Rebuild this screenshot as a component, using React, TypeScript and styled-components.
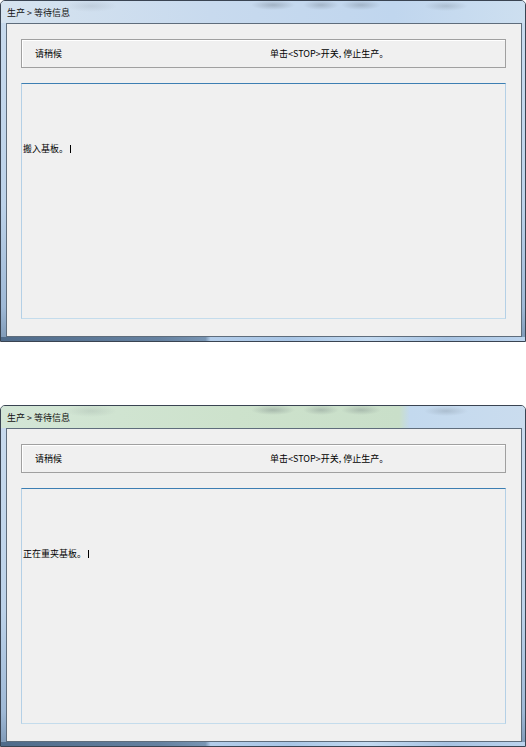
import React from 'react';
import styled, { createGlobalStyle } from 'styled-components';

const GlobalStyle = createGlobalStyle`
  html, body {
    margin: 0;
    padding: 0;
    background: #ffffff;
  }
  body {
    font-family: "Noto Sans CJK SC", "Noto Sans", sans-serif;
    font-size: 9px;
    color: #000;
  }
`;

const Page = styled.div`
  display: flex;
  flex-direction: column;
  gap: 63px;
  width: 526px;
`;

const Window = styled.div`
  box-sizing: border-box;
  width: 526px;
  height: 342px;
  display: flex;
  flex-direction: column;
  border: 1px solid #3a4452;
  border-radius: 5px 5px 0 0;
  overflow: hidden;
  background: linear-gradient(to bottom, #c9dbee 0%, #bcd2e9 60%, #9fb9d6 90%, #7d98b6 100%);
`;

const TitleBar = styled.div<{ $tint: 'blue' | 'green' }>`
  height: 22px;
  flex: none;
  display: flex;
  align-items: center;
  padding-left: 6px;
  font-size: 9px;
  line-height: 1;
  color: #111;
  background:
    radial-gradient(ellipse 22px 5px at 272px 4px, rgba(70, 80, 90, 0.28), transparent),
    radial-gradient(ellipse 18px 5px at 320px 4px, rgba(70, 80, 90, 0.25), transparent),
    radial-gradient(ellipse 20px 5px at 360px 4px, rgba(70, 80, 90, 0.25), transparent),
    radial-gradient(ellipse 22px 5px at 445px 5px, rgba(70, 80, 90, 0.2), transparent),
    radial-gradient(ellipse 26px 6px at 90px 5px, rgba(70, 80, 90, 0.12), transparent),
    ${({ $tint }) =>
      $tint === 'green'
        ? 'linear-gradient(to right, #d3e6d6 0%, #cde2cc 45%, #c9dfc9 76%, #c3d9ee 78%, #cadcee 100%)'
        : 'linear-gradient(to right, #d6e3ef 0%, #c8daee 40%, #c0d6ee 75%, #cddff0 100%)'};
`;

const Client = styled.div`
  flex: 1;
  min-height: 0;
  margin: 0 3px 0 5px;
  border: 1px solid #5f6d7c;
  background: #f0f0f0;
  display: flex;
  flex-direction: column;
  gap: 15px;
  padding: 15px 15px 17px 14px;
`;

const BottomEdge = styled.div`
  height: 4px;
  flex: none;
  background: linear-gradient(
    to right,
    #4f6b8a 0%,
    #6581a0 30%,
    #7895b3 39%,
    #b3cdea 40%,
    #a9c6e6 55%,
    #c3daf1 70%,
    #a7c3e2 85%,
    #bcd4ee 100%
  );
`;

const StatusBox = styled.div`
  box-sizing: border-box;
  height: 29px;
  flex: none;
  border: 1px solid #a0a0a0;
  box-shadow: inset 1px 1px 0 #ffffff;
  display: grid;
  grid-template-columns: 235px 1fr;
  align-items: center;
  padding-left: 13px;
`;

const Label = styled.span`
  font-size: 9px;
  line-height: 1;
  white-space: nowrap;
`;

const MessageBox = styled.div`
  box-sizing: border-box;
  flex: 1;
  border: 1px solid #b4d0e6;
  border-top-color: #3d7fb3;
  border-bottom-color: #c4dcec;
  padding: 59px 0 0 1px;
`;

const MessageLine = styled.div`
  display: flex;
  align-items: center;
  height: 12px;
  font-size: 9px;
  line-height: 12px;
  white-space: nowrap;
`;

const Caret = styled.span`
  display: inline-block;
  width: 1px;
  height: 8px;
  margin-left: 2px;
  background: #000;
`;

type Screen = { tint: 'blue' | 'green'; message: string };

const screens: Screen[] = [
  { tint: 'blue', message: '搬入基板。' },
  { tint: 'green', message: '正在重夹基板。' },
];

const ProductionWindow = ({ tint, message }: Screen) => (
  <Window>
    <TitleBar $tint={tint}>生产 &gt; 等待信息</TitleBar>
    <Client>
      <StatusBox>
        <Label>请稍候</Label>
        <Label>单击&lt;STOP&gt;开关, 停止生产。</Label>
      </StatusBox>
      <MessageBox>
        <MessageLine>
          {message}
          <Caret />
        </MessageLine>
      </MessageBox>
    </Client>
    <BottomEdge />
  </Window>
);

const App = () => (
  <>
    <GlobalStyle />
    <Page>
      {screens.map((s, i) => (
        <ProductionWindow key={i} tint={s.tint} message={s.message} />
      ))}
    </Page>
  </>
);

export default App;
